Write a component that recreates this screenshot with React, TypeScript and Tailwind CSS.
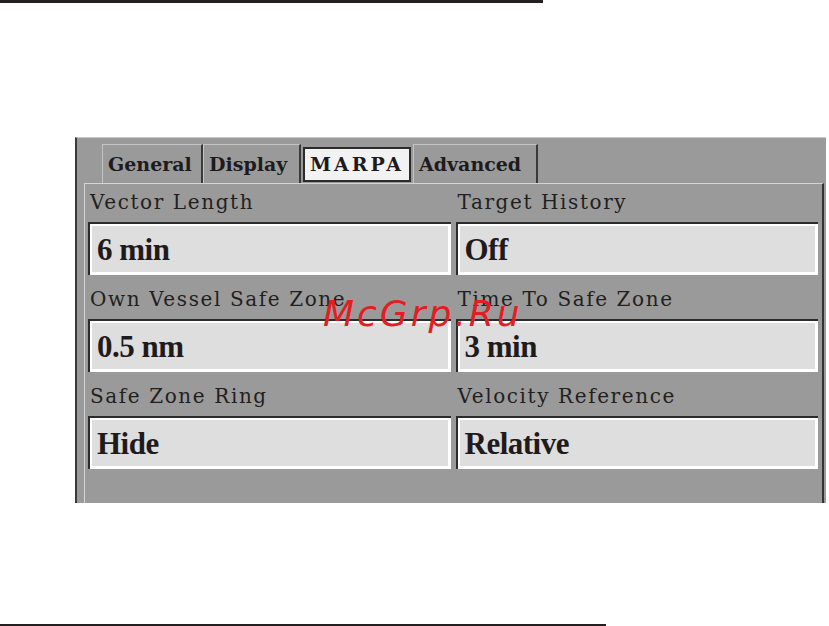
import React from "react";

const SERIF = { fontFamily: '"Liberation Serif", "Times New Roman", serif' };
const LABEL = { fontFamily: '"DejaVu Serif", "Liberation Serif", serif' };

const TABS = [
  { label: "General", w: "w-[101px]", active: false },
  { label: "Display", w: "w-[98px]", active: false },
  { label: "MARPA", w: "w-[112px]", active: true },
  { label: "Advanced", w: "w-[125px]", active: false },
];

const FIELDS = [
  { label: "Vector Length", value: "6 min" },
  { label: "Target History", value: "Off" },
  { label: "Own Vessel Safe Zone", value: "0.5 nm" },
  { label: "Time To Safe Zone", value: "3 min" },
  { label: "Safe Zone Ring", value: "Hide" },
  { label: "Velocity Reference", value: "Relative" },
];

function Tab({ label, w, active }: { label: string; w: string; active: boolean }) {
  if (active) {
    return (
      <div className={`${w} h-[39px] pt-[3px] px-[2px]`}>
        <div className="h-[35px] border-2 border-[#2b2b2b] bg-[#f2f2f2] flex items-center justify-center">
          <span className="text-[19px] leading-none font-bold tracking-[3px] text-[#1f1b1c]" style={LABEL}>{label}</span>
        </div>
      </div>
    );
  }
  return (
    <div className={`${w} h-[39px] border-t border-l border-[#c4c4c4] border-r-2 border-r-[#3a3a3a] flex items-center pl-[5px]`}>
      <span className="text-[19px] leading-none font-bold text-[#1f1b1c]" style={LABEL}>{label}</span>
    </div>
  );
}

function Field({ label, value }: { label: string; value: string }) {
  return (
    <div className="flex flex-col">
      <div className="h-[39px] flex items-end pb-[10px] pl-[2px]">
        <span className="text-[20px] leading-none tracking-[1.6px] text-[#231f20]" style={LABEL}>{label}</span>
      </div>
      <div className="h-[53px] border-t-2 border-l-2 border-[#2b2b2b] bg-white pr-[3px] pb-[3px] pt-[2px] pl-[2px]">
        <div className="h-full bg-[#dedede] flex items-center pl-[5px]">
          <span className="text-[31px] leading-none font-bold text-[#1f1b1c] tracking-[-0.5px]">{value}</span>
        </div>
      </div>
    </div>
  );
}

export default function App() {
  return (
    <div className="relative w-[829px] h-[626px] bg-white overflow-hidden" style={SERIF}>
      {/* top rule */}
      <div className="w-[543px] h-[3px] bg-[#231f20]" />

      {/* settings panel */}
      <div className="ml-[75px] mt-[134px] w-[751px] h-[366px] bg-[#9a9a9a] border-l-2 border-l-[#3a3a3a] border-t border-t-[#c8c8c8] flex flex-col">
        <div className="flex pl-[25px] pt-[6px]">
          {TABS.map((t) => (
            <Tab key={t.label} {...t} />
          ))}
        </div>
        <div className="flex-1 ml-[7px] mr-[2px] border-t border-l border-[#d4d4d4] border-r-2 border-r-[#333] pl-[3px] pr-[4px]">
          <div className="grid grid-cols-2 gap-x-[5px] gap-y-[5px] -mt-[1px]">
            {FIELDS.map((f) => (
              <Field key={f.label} {...f} />
            ))}
          </div>
        </div>
      </div>

      {/* bottom rule */}
      <div className="mt-[121px] w-[606px] h-[2px] bg-[#231f20]" />

      {/* watermark */}
      <div
        className="absolute left-[323px] top-[296px] text-[36px] italic leading-none tracking-[3px] text-[#e21d24]"
        style={{ fontFamily: '"DejaVu Sans", sans-serif' }}
      >
        McGrp.Ru
      </div>
    </div>
  );
}
